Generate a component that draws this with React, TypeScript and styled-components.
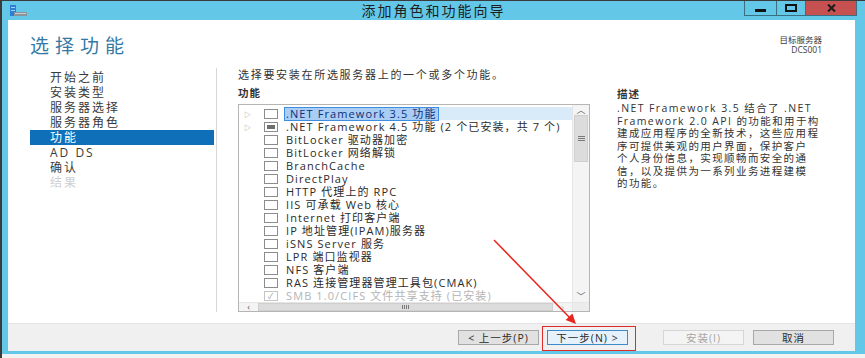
import React from 'react';
import styled, { createGlobalStyle, css } from 'styled-components';

const GlobalStyle = createGlobalStyle`
    body {
        margin: 0;
        background: #ffffff;
        font-family: 'Open Sans', 'Noto Sans CJK SC', sans-serif;
    }
`;

const FRAME = '#63c8e8';

const Screen = styled.div`
    position: relative;
    width: 865px;
    height: 358px;
    overflow: hidden;
`;

const Window = styled.div`
    display: flex;
    flex-direction: column;
    box-sizing: border-box;
    width: 865px;
    height: 354px;
    padding: 0 10px 3px 6px;
    background: ${FRAME};
    border-top: 1px solid #3b3b3b;
    border-left: 2px solid #3b3b3b;
`;

const BelowStrip = styled.div`
    height: 4px;
    background: #f2f2f2;
    border-left: 2px solid #3b3b3b;
`;

const TitleBar = styled.div`
    display: grid;
    grid-template-columns: 1fr auto 1fr;
    align-items: start;
    height: 19px;
    margin: 0 -10px 0 -6px;
`;

const TitleIcon = styled.svg`
    margin: 4px 0 0 8px;
`;

const TitleText = styled.div`
    font-family: 'Noto Sans CJK SC', sans-serif;
    font-size: 14px;
    letter-spacing: 2px;
    line-height: 19px;
    color: #1e1e1e;
`;

const WinButtons = styled.div`
    display: flex;
    justify-self: end;
    margin-right: 8px;
`;

const WinButton = styled.div<{ $w: number; $close?: boolean }>`
    display: flex;
    align-items: center;
    justify-content: center;
    box-sizing: border-box;
    width: ${p => p.$w}px;
    height: 15px;
    border: 1px solid #3a6f82;
    border-top: none;
    margin-left: -1px;
    background: ${p => (p.$close ? '#c75050' : FRAME)};
`;

const Client = styled.div`
    display: flex;
    flex-direction: column;
    flex: 1;
    background: #ffffff;
`;

const Main = styled.div`
    display: flex;
    flex-direction: column;
    height: 303px;
`;

const Header = styled.div`
    display: flex;
    justify-content: space-between;
    box-sizing: border-box;
    height: 48px;
    padding: 13px 33px 0 22px;
`;

const PageTitle = styled.div`
    font-family: 'Noto Sans CJK SC', sans-serif;
    font-size: 19px;
    line-height: 24px;
    letter-spacing: 6px;
    color: #3479a5;
`;

const Target = styled.div`
    margin-top: 2px;
    text-align: right;
    font-size: 8.5px;
    line-height: 10px;
    color: #3c3c3c;
`;

const Body = styled.div`
    display: flex;
    flex: 1;
`;

const Nav = styled.div`
    box-sizing: border-box;
    width: 209px;
    height: 244px;
    padding: 2px 0 0 22px;
    border-right: 1px solid #d7d7d7;
`;

const NavItem = styled.div<{ $active?: boolean; $disabled?: boolean }>`
    width: 184px;
    height: 15px;
    box-sizing: border-box;
    padding-left: 20px;
    font-size: 12px;
    line-height: 15px;
    letter-spacing: 2px;
    color: #3a3a3a;
    ${p =>
        p.$active &&
        css`
            background: #0f6fb8;
            color: #ffffff;
        `}
    ${p =>
        p.$disabled &&
        css`
            color: #cfcfcf;
        `}
`;

const Content = styled.div`
    display: flex;
    padding-left: 21px;
`;

const ListColumn = styled.div`
    display: flex;
    flex-direction: column;
    width: 352px;
`;

const Instruction = styled.div`
    font-size: 11px;
    line-height: 14px;
    letter-spacing: 1.7px;
    color: #333333;
`;

const SectionLabel = styled.div`
    margin-top: 4px;
    font-size: 10.5px;
    line-height: 14px;
    font-weight: 700;
    letter-spacing: 1px;
    color: #333333;
`;

const ListBox = styled.div`
    display: grid;
    grid-template-columns: 1fr 17px;
    grid-template-rows: 1fr 9px;
    box-sizing: border-box;
    height: 208px;
    margin-top: 4px;
    border: 1px solid #b5b5b5;
`;

const Rows = styled.div`
    overflow: hidden;
    padding-top: 2px;
`;

const Row = styled.div<{ $selected?: boolean }>`
    display: flex;
    align-items: center;
    height: 13px;
    font-size: 11px;
    letter-spacing: 1.1px;
    white-space: nowrap;
    color: #2b2b2b;
    ${p =>
        p.$selected &&
        css`
            background: linear-gradient(to right, transparent 46px, #d9eaf9 46px);
        `}
`;

const Expander = styled.span`
    width: 25px;
    padding-left: 5px;
    box-sizing: border-box;
    font-size: 7px;
    color: #9a9a9a;
`;

const Check = styled.span<{ $state?: 'partial' | 'checked-disabled' }>`
    display: flex;
    align-items: center;
    justify-content: center;
    box-sizing: border-box;
    width: 14px;
    height: 10px;
    margin-right: 7px;
    border: 1px solid #8c8c8c;
    background: #ffffff;
    font-size: 8px;
    color: #9a9a9a;
    ${p =>
        p.$state === 'partial' &&
        css`
            &::after {
                content: '';
                width: 8px;
                height: 4px;
                background: #6e6e6e;
            }
        `}
    ${p =>
        p.$state === 'checked-disabled' &&
        css`
            border-color: #c4c4c4;
        `}
`;

const Label = styled.span<{ $selected?: boolean; $disabled?: boolean }>`
    line-height: 12px;
    padding: 0 1px;
    ${p =>
        p.$selected &&
        css`
            background: #a9cdf3;
            outline: 1px solid #3b8ee2;
            color: #0c2f7d;
        `}
    ${p =>
        p.$disabled &&
        css`
            color: #b4b4b4;
        `}
`;

const VScroll = styled.div`
    display: flex;
    flex-direction: column;
    align-items: center;
    background: #f4f4f4;
    border-left: 1px solid #e6e6e6;
`;

const Arrow = styled.div`
    display: flex;
    align-items: center;
    justify-content: center;
    width: 100%;
    height: 10px;
    font-size: 9px;
    line-height: 10px;
    color: #606060;
`;

const VThumb = styled.div`
    display: flex;
    align-items: center;
    justify-content: center;
    width: 14px;
    height: 47px;
    background: #dcdcdc;
    border: 1px solid #cfcfcf;
    box-sizing: border-box;
`;

const VGrip = styled.div`
    width: 7px;
    height: 6px;
    background: repeating-linear-gradient(to bottom, #7a7a7a 0 1px, #dcdcdc 1px 2px);
`;

const Spacer = styled.div`
    flex: 1;
`;

const HScroll = styled.div`
    display: flex;
    background: #f4f4f4;
    border-top: 1px solid #e6e6e6;
`;

const HArrow = styled.div<{ $faint?: boolean }>`
    display: flex;
    align-items: center;
    justify-content: center;
    width: 19px;
    font-size: 9px;
    line-height: 8px;
    color: ${p => (p.$faint ? '#c0c0c0' : '#606060')};
`;

const HThumb = styled.div`
    display: flex;
    align-items: center;
    justify-content: center;
    flex: 1;
    background: #dcdcdc;
    border: 1px solid #cfcfcf;
`;

const HGrip = styled.div`
    width: 7px;
    height: 4px;
    background: repeating-linear-gradient(to right, #7a7a7a 0 1px, #dcdcdc 1px 2px);
`;

const Corner = styled.div`
    background: #ececec;
    border-top: 1px solid #e6e6e6;
    border-left: 1px solid #e6e6e6;
`;

const DescColumn = styled.div`
    display: flex;
    flex-direction: column;
    margin-left: 27px;
    padding-top: 15px;
`;

const DescText = styled.div`
    margin-top: 1px;
    font-size: 10.5px;
    line-height: 12.5px;
    letter-spacing: 1.4px;
    color: #333333;
`;

const Footer = styled.div`
    display: flex;
    align-items: center;
    justify-content: flex-end;
    flex: 1;
    padding-right: 21px;
    background: #f0f0f0;
    border-top: 1px solid #e4e4e4;
`;

const Button = styled.div<{ $variant?: 'focus' | 'disabled' }>`
    display: flex;
    align-items: center;
    justify-content: center;
    box-sizing: border-box;
    width: 81px;
    height: 15px;
    font-size: 10.5px;
    letter-spacing: 1px;
    color: #2b2b2b;
    background: #e1e1e1;
    border: 1px solid #a8a8a8;
    ${p =>
        p.$variant === 'focus' &&
        css`
            background: #e5f1fb;
            border-color: #3c8ccc;
        `}
    ${p =>
        p.$variant === 'disabled' &&
        css`
            background: #f4f4f4;
            border-color: #d6d6d6;
            color: #a6a6a6;
        `}
`;

const Highlight = styled.div`
    position: relative;
    margin: 0 35px 0 8px;
    &::after {
        content: '';
        position: absolute;
        left: -5px;
        right: -8px;
        top: -4px;
        bottom: -6px;
        border: 1.5px solid #e12a2a;
    }
`;

const CancelButton = styled(Button)`
    margin-left: 9px;
`;

const Annotation = styled.svg`
    position: absolute;
    left: 0;
    top: 0;
    pointer-events: none;
`;

const navItems = ['开始之前', '安装类型', '服务器选择', '服务器角色', '功能', 'AD DS', '确认', '结果'];

type Feature = {
    name: string;
    expandable?: boolean;
    state?: 'partial' | 'checked-disabled';
    selected?: boolean;
};

const features: Feature[] = [
    { name: '.NET Framework 3.5 功能', expandable: true, selected: true },
    { name: '.NET Framework 4.5 功能 (2 个已安装，共 7 个)', expandable: true, state: 'partial' },
    { name: 'BitLocker 驱动器加密' },
    { name: 'BitLocker 网络解锁' },
    { name: 'BranchCache' },
    { name: 'DirectPlay' },
    { name: 'HTTP 代理上的 RPC' },
    { name: 'IIS 可承载 Web 核心' },
    { name: 'Internet 打印客户端' },
    { name: 'IP 地址管理(IPAM)服务器' },
    { name: 'iSNS Server 服务' },
    { name: 'LPR 端口监视器' },
    { name: 'NFS 客户端' },
    { name: 'RAS 连接管理器管理工具包(CMAK)' },
    { name: 'SMB 1.0/CIFS 文件共享支持 (已安装)', state: 'checked-disabled' },
];

const description = [
    '.NET Framework 3.5 结合了 .NET',
    'Framework 2.0 API 的功能和用于构',
    '建成应用程序的全新技术，这些应用程',
    '序可提供美观的用户界面，保护客户',
    '个人身份信息，实现顺畅而安全的通',
    '信，以及提供为一系列业务进程建模',
    '的功能。',
];

const App = () => (
    <Screen>
        <GlobalStyle />
        <Window>
            <TitleBar>
                <TitleIcon width="18" height="12" viewBox="0 0 18 12">
                    <rect x="0" y="0" width="6" height="11" fill="#2d7fd6" />
                    <rect x="1" y="2" width="4" height="1" fill="#9fd0ff" />
                    <rect x="1" y="5" width="4" height="1" fill="#9fd0ff" />
                    <rect x="4" y="7" width="13" height="4" fill="#8a949c" />
                    <rect x="5" y="8" width="11" height="1" fill="#c4ccd2" />
                </TitleIcon>
                <TitleText>添加角色和功能向导</TitleText>
                <WinButtons>
                    <WinButton $w={33}>
                        <svg width="11" height="8" viewBox="0 0 11 8">
                            <rect x="0" y="5" width="11" height="3" fill="#111" />
                        </svg>
                    </WinButton>
                    <WinButton $w={30}>
                        <svg width="12" height="8" viewBox="0 0 12 8">
                            <rect x="1" y="1" width="10" height="6" fill="none" stroke="#111" strokeWidth="2" />
                        </svg>
                    </WinButton>
                    <WinButton $w={52} $close>
                        <svg width="9" height="8" viewBox="0 0 9 8">
                            <path d="M1 0.5 L8 7.5 M8 0.5 L1 7.5" stroke="#1a1a1a" strokeWidth="2" />
                        </svg>
                    </WinButton>
                </WinButtons>
            </TitleBar>
            <Client>
                <Main>
                    <Header>
                        <PageTitle>选择功能</PageTitle>
                        <Target>
                            <div>目标服务器</div>
                            <div>DCS001</div>
                        </Target>
                    </Header>
                    <Body>
                        <Nav>
                            {navItems.map(item => (
                                <NavItem key={item} $active={item === '功能'} $disabled={item === '结果'}>
                                    {item}
                                </NavItem>
                            ))}
                        </Nav>
                        <Content>
                            <ListColumn>
                                <Instruction>选择要安装在所选服务器上的一个或多个功能。</Instruction>
                                <SectionLabel>功能</SectionLabel>
                                <ListBox>
                                    <Rows>
                                        {features.map(f => (
                                            <Row key={f.name} $selected={f.selected}>
                                                <Expander>{f.expandable ? '▷' : ''}</Expander>
                                                <Check $state={f.state}>
                                                    {f.state === 'checked-disabled' ? '✓' : ''}
                                                </Check>
                                                <Label
                                                    $selected={f.selected}
                                                    $disabled={f.state === 'checked-disabled'}
                                                >
                                                    {f.name}
                                                </Label>
                                            </Row>
                                        ))}
                                    </Rows>
                                    <VScroll>
                                        <Arrow>︿</Arrow>
                                        <VThumb>
                                            <VGrip />
                                        </VThumb>
                                        <Spacer />
                                        <Arrow>﹀</Arrow>
                                    </VScroll>
                                    <HScroll>
                                        <HArrow>‹</HArrow>
                                        <HThumb>
                                            <HGrip />
                                        </HThumb>
                                        <HArrow $faint>›</HArrow>
                                    </HScroll>
                                    <Corner />
                                </ListBox>
                            </ListColumn>
                            <DescColumn>
                                <SectionLabel>描述</SectionLabel>
                                <DescText>
                                    {description.map(line => (
                                        <div key={line}>{line}</div>
                                    ))}
                                </DescText>
                            </DescColumn>
                        </Content>
                    </Body>
                </Main>
                <Footer>
                    <Button>&lt; 上一步(P)</Button>
                    <Highlight>
                        <Button $variant="focus">下一步(N) &gt;</Button>
                    </Highlight>
                    <Button $variant="disabled">安装(I)</Button>
                    <CancelButton>取消</CancelButton>
                </Footer>
            </Client>
        </Window>
        <BelowStrip />
        <Annotation width="865" height="358" viewBox="0 0 865 358">
            <line x1="494" y1="240" x2="570" y2="318" stroke="#e8261f" strokeWidth="1.5" />
            <polygon points="576,324 565.6,320.1 572.4,313.5" fill="#e8261f" />
        </Annotation>
    </Screen>
);

export default App;
